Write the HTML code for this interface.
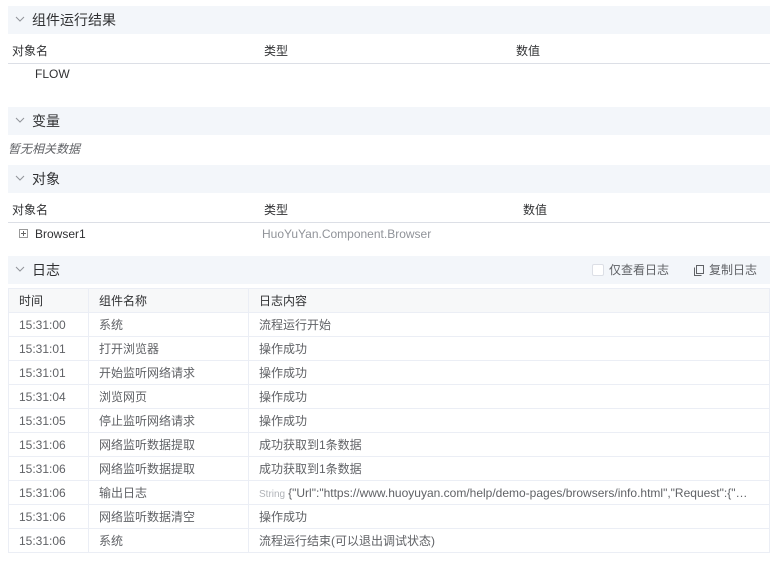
<!DOCTYPE html>
<html><head><meta charset="utf-8"><style>
*{margin:0;padding:0;box-sizing:border-box}
body{width:782px;height:579px;background:#fff;font-family:"Liberation Sans","Noto Sans CJK SC",sans-serif;font-size:12px;color:#606266;position:relative;overflow:hidden}
.ab{position:absolute}
.hd{position:absolute;left:8px;width:762px;height:28px;background:#f3f6fa;color:#303133;font-size:14px;line-height:28px;padding-left:24px}
.hd svg{position:absolute;left:7px;top:10px}
.th{position:absolute;left:8px;width:762px;height:26px;border-bottom:1px solid #dcdfe6;color:#303133;font-size:12px;line-height:26px}
.th span{position:absolute;top:0}
table{position:absolute;left:8px;top:288px;width:762px;border-collapse:collapse;font-size:12px}
td{border:1px solid #ebeef5;height:24px;padding:0 10px;color:#606266;white-space:nowrap}
tr:first-child td{background:#f7f8f9;color:#303133}
</style></head><body>
<div class="hd" style="top:6px"><svg width="10" height="6" viewBox="0 0 10 6"><path d="M1 1L5 5L9 1" fill="none" stroke="#909399" stroke-width="1"/></svg>组件运行结果</div>
<div class="th" style="top:38px"><span style="left:4px">对象名</span><span style="left:256px">类型</span><span style="left:508px">数值</span></div>
<div class="ab" style="left:35px;top:67px;color:#303133">FLOW</div>
<div class="hd" style="top:107px"><svg width="10" height="6" viewBox="0 0 10 6"><path d="M1 1L5 5L9 1" fill="none" stroke="#909399" stroke-width="1"/></svg>变量</div>
<div class="ab" style="left:8px;top:140px;font-style:italic;color:#606266">暂无相关数据</div>
<div class="hd" style="top:165px"><svg width="10" height="6" viewBox="0 0 10 6"><path d="M1 1L5 5L9 1" fill="none" stroke="#909399" stroke-width="1"/></svg>对象</div>
<div class="th" style="top:197px"><span style="left:4px">对象名</span><span style="left:256px">类型</span><span style="left:515px">数值</span></div>
<div class="ab" style="left:19px;top:229px;width:9px;height:9px;border:1px solid #999"></div>
<div class="ab" style="left:21px;top:233px;width:5px;height:1px;background:#666"></div>
<div class="ab" style="left:23px;top:231px;width:1px;height:5px;background:#666"></div>
<div class="ab" style="left:35px;top:227px;color:#303133">Browser1</div>
<div class="ab" style="left:262px;top:227px;color:#909399">HuoYuYan.Component.Browser</div>
<div class="hd" style="top:256px"><svg width="10" height="6" viewBox="0 0 10 6"><path d="M1 1L5 5L9 1" fill="none" stroke="#909399" stroke-width="1"/></svg>日志
<span style="position:absolute;left:584px;top:8px;width:12px;height:12px;border:1px solid #dcdfe6;background:#fff;border-radius:2px"></span>
<span style="position:absolute;left:601px;font-size:12px;color:#606266">仅查看日志</span>
<svg style="left:686px;top:9px" width="10" height="11" viewBox="0 0 10 11"><path d="M2.5 0.5H9.5V8.5H2.5Z M0.5 2.5V10.5H7.5" fill="none" stroke="#606266"/></svg>
<span style="position:absolute;left:701px;font-size:12px;color:#606266">复制日志</span></div>
<table>
<colgroup><col style="width:80px"><col style="width:160px"><col></colgroup>
<tr><td>时间</td><td>组件名称</td><td>日志内容</td></tr>
<tr><td>15:31:00</td><td>系统</td><td>流程运行开始</td></tr>
<tr><td>15:31:01</td><td>打开浏览器</td><td>操作成功</td></tr>
<tr><td>15:31:01</td><td>开始监听网络请求</td><td>操作成功</td></tr>
<tr><td>15:31:04</td><td>浏览网页</td><td>操作成功</td></tr>
<tr><td>15:31:05</td><td>停止监听网络请求</td><td>操作成功</td></tr>
<tr><td>15:31:06</td><td>网络监听数据提取</td><td>成功获取到1条数据</td></tr>
<tr><td>15:31:06</td><td>网络监听数据提取</td><td>成功获取到1条数据</td></tr>
<tr><td>15:31:06</td><td>输出日志</td><td><span style="font-size:10px;color:#b0b3b8;margin-right:3px">String</span>{"Url":"https://www.huoyuyan.com/help/demo-pages/browsers/info.html","Request":{"…</td></tr>
<tr><td>15:31:06</td><td>网络监听数据清空</td><td>操作成功</td></tr>
<tr><td>15:31:06</td><td>系统</td><td>流程运行结束(可以退出调试状态)</td></tr>
</table>
</body></html>
